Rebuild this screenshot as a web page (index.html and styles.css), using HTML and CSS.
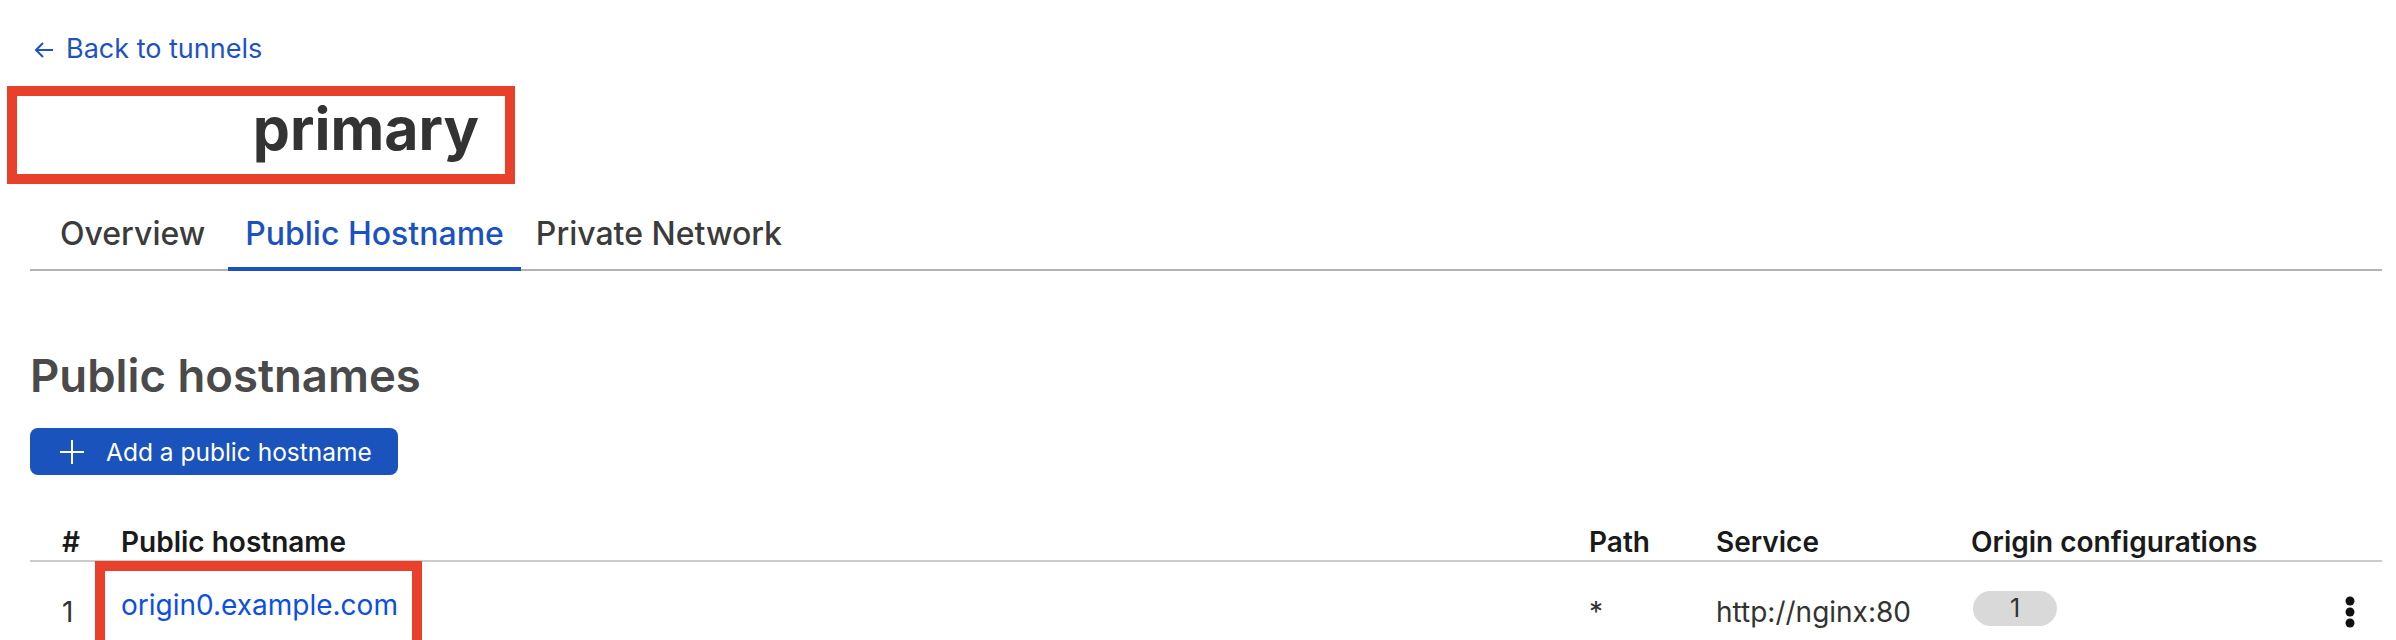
FILE: index.html
```html
<!DOCTYPE html>
<html lang="en">
<head>
  <meta charset="UTF-8" />
  <meta name="viewport" content="width=device-width, initial-scale=1.0"/>
  <title>primary - Tunnel</title>
  <link rel="stylesheet" href="styles.css">
</head>
<body>
  <div class="page">

    <a class="back-link" href="#">
      <svg class="back-icon" width="20" height="20" viewBox="0 0 20 20" fill="none" stroke="currentColor" stroke-width="2">
        <path d="M19 10H2M9 3L2 10l7 7"/>
      </svg>
      Back to tunnels
    </a>

    <h1 class="tunnel-name">primary</h1>

    <nav class="tabs">
      <a class="tab" href="#">Overview</a>
      <a class="tab active" href="#">Public Hostname</a>
      <a class="tab" href="#">Private Network</a>
    </nav>

    <h2 class="section-title">Public hostnames</h2>

    <button class="add-btn" type="button">
      <svg width="24" height="24" viewBox="0 0 24 24" fill="none" stroke="currentColor" stroke-width="2">
        <path d="M12 0v24M0 12h24"/>
      </svg>
      Add a public hostname
    </button>

    <div class="hosts">
      <div class="hosts-row hosts-head">
        <div class="cell cell-num">#</div>
        <div class="cell">Public hostname</div>
        <div class="cell">Path</div>
        <div class="cell">Service</div>
        <div class="cell">Origin configurations</div>
        <div class="cell"></div>
      </div>

      <div class="hosts-row">
        <div class="cell cell-num">1</div>
        <div class="cell"><a class="host-link" href="#">origin0.example.com</a></div>
        <div class="cell">*</div>
        <div class="cell">http://nginx:80</div>
        <div class="cell"><span class="count-badge">1</span></div>
        <div class="cell cell-menu">
          <svg width="10" height="32" viewBox="0 0 10 32" fill="#111">
            <circle cx="5" cy="5" r="4.5"/>
            <circle cx="5" cy="16" r="4.5"/>
            <circle cx="5" cy="27" r="4.5"/>
          </svg>
        </div>
      </div>
    </div>

  </div>
</body>
</html>
```

FILE: styles.css
```css
body {
  margin: 0;
  font-family: Inter, "Noto Sans", sans-serif;
  background: #ffffff;
  color: #333333;
}

.page {
  padding: 32px 14px 0 30px;
}

a {
  text-decoration: none;
}

.back-link {
  display: inline-flex;
  align-items: center;
  gap: 12px;
  margin-left: 4px;
  font-size: 27px;
  color: #1d53c1;
}

.back-icon {
  margin-top: 2px;
}

.tunnel-name {
  box-sizing: border-box;
  width: 508px;
  margin: 21px 0 0 -23px;
  padding: 0 26px 12px 0;
  border: 10px solid #e8402a;
  font-size: 59px;
  font-weight: 700;
  line-height: 66px;
  text-align: right;
  color: #333333;
}

.tabs {
  display: flex;
  margin-top: 31px;
  padding-left: 13px;
  box-shadow: inset 0 -2px 0 #b3b3b3;
}

.tab {
  padding: 0 17px 14px;
  border-bottom: 4px solid transparent;
  font-size: 32px;
  font-weight: 500;
  line-height: 38px;
  color: #3b3b3b;
}

.tab + .tab {
  margin-left: 6px;
}

.tab.active + .tab {
  margin-left: -2px;
}

.tab.active {
  color: #1a52c0;
  border-bottom-color: #1a52c0;
}

.section-title {
  margin: 77px 0 0;
  font-size: 45.5px;
  font-weight: 600;
  color: #4a4a4a;
}

.add-btn {
  display: inline-flex;
  align-items: center;
  gap: 22px;
  height: 47px;
  margin-top: 25px;
  padding: 0 26px 0 30px;
  border: none;
  border-radius: 8px;
  background: #1b53bd;
  color: #ffffff;
  font-family: inherit;
  font-size: 24.5px;
  cursor: pointer;
}

.hosts {
  margin-top: 37px;
}

.hosts-row {
  display: grid;
  grid-template-columns: 91px 1fr 127px 255px 347px 64px;
  align-items: center;
  font-size: 28px;
  color: #333333;
}

.hosts-head {
  border-bottom: 2px solid #cccccc;
  font-weight: 600;
  color: #1a1a1a;
}

.hosts-head .cell {
  padding: 14px 0 2px;
  line-height: 32px;
}

.hosts-row .cell-num {
  padding-left: 32px;
}

.cell-menu {
  display: flex;
  justify-content: center;
}

.host-link {
  display: inline-block;
  margin: -1px 0 0 -26px;
  padding: 0 14px 0 16px;
  border: 10px solid #e8402a;
  line-height: 68px;
  height: 80px;
  color: #0c4fe3;
}

.count-badge {
  display: inline-block;
  width: 84px;
  height: 35px;
  margin: 0 0 8px 2px;
  border-radius: 18px;
  background: #d9d9d9;
  text-align: center;
  font-size: 25px;
  line-height: 35px;
  color: #333333;
}
```
